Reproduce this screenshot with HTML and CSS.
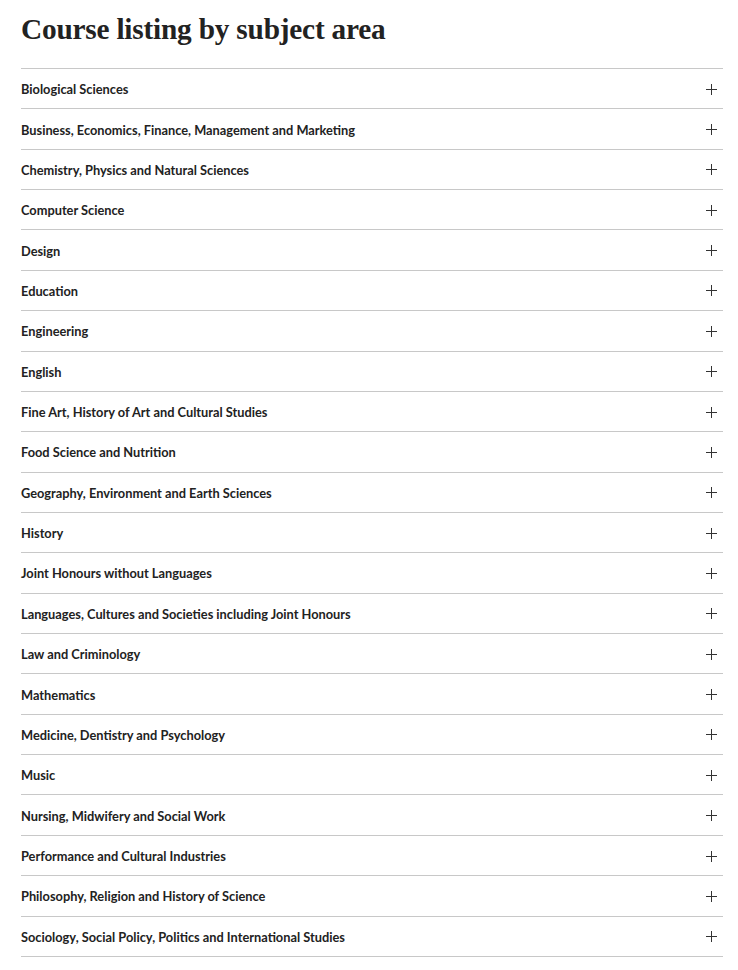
FILE: index.html
```html
<!DOCTYPE html>
<html lang="en">
<head>
    <meta charset="UTF-8">
    <meta name="viewport" content="width=device-width, initial-scale=1.0">
    <link rel="stylesheet" href="styles.css">
    <title>Course listing by subject area</title>
</head>
<body>
    <div class="container">
        <h1>Course listing by subject area</h1>

        <!-- Subject accordion -->
        <ul class="subjects">
            <li class="subject"><span>Biological Sciences</span><i class="plus"></i></li>
            <li class="subject"><span>Business, Economics, Finance, Management and Marketing</span><i class="plus"></i></li>
            <li class="subject"><span>Chemistry, Physics and Natural Sciences</span><i class="plus"></i></li>
            <li class="subject"><span>Computer Science</span><i class="plus"></i></li>
            <li class="subject"><span>Design</span><i class="plus"></i></li>
            <li class="subject"><span>Education</span><i class="plus"></i></li>
            <li class="subject"><span>Engineering</span><i class="plus"></i></li>
            <li class="subject"><span>English</span><i class="plus"></i></li>
            <li class="subject"><span>Fine Art, History of Art and Cultural Studies</span><i class="plus"></i></li>
            <li class="subject"><span>Food Science and Nutrition</span><i class="plus"></i></li>
            <li class="subject"><span>Geography, Environment and Earth Sciences</span><i class="plus"></i></li>
            <li class="subject"><span>History</span><i class="plus"></i></li>
            <li class="subject"><span>Joint Honours without Languages</span><i class="plus"></i></li>
            <li class="subject"><span>Languages, Cultures and Societies including Joint Honours</span><i class="plus"></i></li>
            <li class="subject"><span>Law and Criminology</span><i class="plus"></i></li>
            <li class="subject"><span>Mathematics</span><i class="plus"></i></li>
            <li class="subject"><span>Medicine, Dentistry and Psychology</span><i class="plus"></i></li>
            <li class="subject"><span>Music</span><i class="plus"></i></li>
            <li class="subject"><span>Nursing, Midwifery and Social Work</span><i class="plus"></i></li>
            <li class="subject"><span>Performance and Cultural Industries</span><i class="plus"></i></li>
            <li class="subject"><span>Philosophy, Religion and History of Science</span><i class="plus"></i></li>
            <li class="subject"><span>Sociology, Social Policy, Politics and International Studies</span><i class="plus"></i></li>
        </ul>
    </div>
</body>
</html>
```

FILE: styles.css
```css
body {
    margin: 0;
    padding: 0;
    background: #ffffff;
    color: #222;
    font-family: Lato, "Open Sans", sans-serif;
}

.container {
    padding: 10px 15px 0 21px;
}

/* Page title */
h1 {
    margin: 0;
    font-family: "Liberation Serif", serif;
    font-weight: 700;
    font-size: 29.3px;
    line-height: 38px;
    letter-spacing: -0.2px;
    color: #222;
    padding-bottom: 20px;
}

/* Accordion list */
.subjects {
    list-style: none;
    margin: 0;
    padding: 0;
    border-bottom: 1px solid #c8c8c8;
}

.subject {
    display: flex;
    align-items: center;
    justify-content: space-between;
    box-sizing: border-box;
    height: 40.36px;
    border-top: 1px solid #c8c8c8;
    font-size: 12.8px;
    font-weight: 700;
    padding-top: 1px;
}

.plus {
    position: relative;
    width: 11px;
    height: 11px;
    margin-right: 6px;
}

.plus::before,
.plus::after {
    content: "";
    position: absolute;
    background: #333;
}

.plus::before {
    left: 0;
    top: 5px;
    width: 11px;
    height: 1px;
}

.plus::after {
    left: 5px;
    top: 0;
    width: 1px;
    height: 11px;
}
```
